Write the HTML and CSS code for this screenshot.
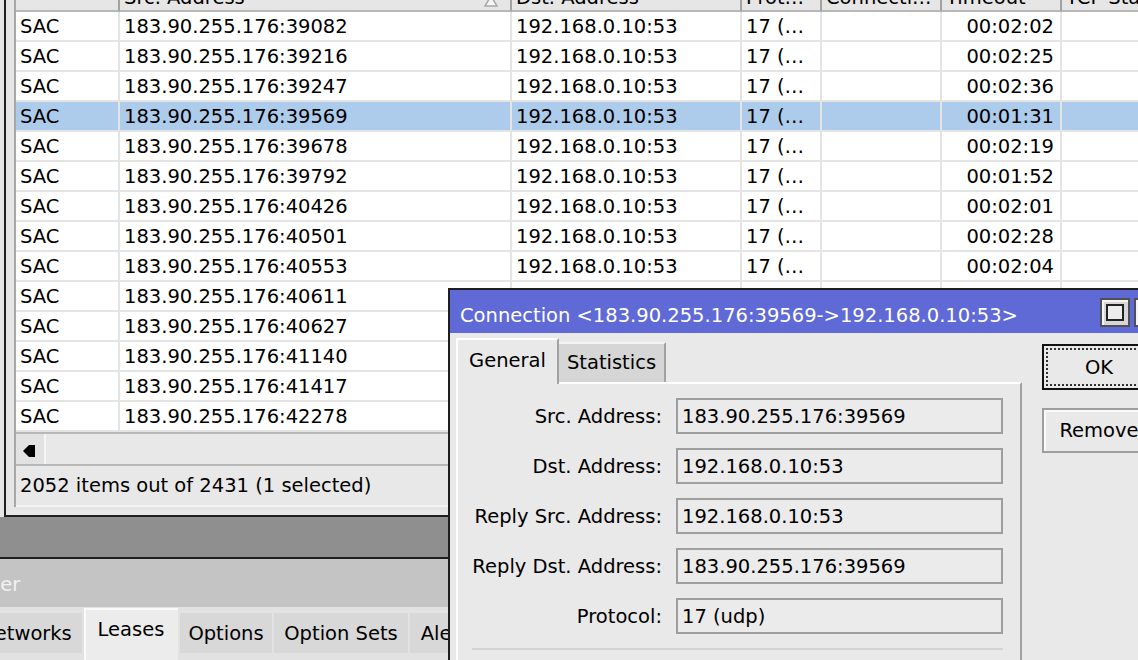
FILE: index.html
```html
<!DOCTYPE html>
<html>
<head>
    <link rel="stylesheet" href="styles.css">
</head>
<body>
<div class="desktop">

    <div class="window list-window">
        <div class="list-frame">
            <div class="list-body">
                <div class="row head">
                    <div class="cell c1"></div>
                    <div class="cell c2"><span>Src. Address</span>
                        <svg class="sort" width="14" height="12" viewBox="0 0 14 12"><polygon points="7,1 13,11 1,11" fill="#f6f6f6" stroke="#a8a8a8" stroke-width="1.5"/></svg>
                    </div>
                    <div class="cell c3">Dst. Address</div>
                    <div class="cell c4">Prot…</div>
                    <div class="cell c5">Connecti…</div>
                    <div class="cell c6 left">Timeout</div>
                    <div class="cell c7">TCP State</div>
                </div>
                <div class="row"><div class="cell c1">SAC</div><div class="cell c2">183.90.255.176:39082</div><div class="cell c3">192.168.0.10:53</div><div class="cell c4">17 (…</div><div class="cell c5"></div><div class="cell c6">00:02:02</div><div class="cell c7"></div></div>
                <div class="row"><div class="cell c1">SAC</div><div class="cell c2">183.90.255.176:39216</div><div class="cell c3">192.168.0.10:53</div><div class="cell c4">17 (…</div><div class="cell c5"></div><div class="cell c6">00:02:25</div><div class="cell c7"></div></div>
                <div class="row"><div class="cell c1">SAC</div><div class="cell c2">183.90.255.176:39247</div><div class="cell c3">192.168.0.10:53</div><div class="cell c4">17 (…</div><div class="cell c5"></div><div class="cell c6">00:02:36</div><div class="cell c7"></div></div>
                <div class="row selected"><div class="cell c1">SAC</div><div class="cell c2">183.90.255.176:39569</div><div class="cell c3">192.168.0.10:53</div><div class="cell c4">17 (…</div><div class="cell c5"></div><div class="cell c6">00:01:31</div><div class="cell c7"></div></div>
                <div class="row"><div class="cell c1">SAC</div><div class="cell c2">183.90.255.176:39678</div><div class="cell c3">192.168.0.10:53</div><div class="cell c4">17 (…</div><div class="cell c5"></div><div class="cell c6">00:02:19</div><div class="cell c7"></div></div>
                <div class="row"><div class="cell c1">SAC</div><div class="cell c2">183.90.255.176:39792</div><div class="cell c3">192.168.0.10:53</div><div class="cell c4">17 (…</div><div class="cell c5"></div><div class="cell c6">00:01:52</div><div class="cell c7"></div></div>
                <div class="row"><div class="cell c1">SAC</div><div class="cell c2">183.90.255.176:40426</div><div class="cell c3">192.168.0.10:53</div><div class="cell c4">17 (…</div><div class="cell c5"></div><div class="cell c6">00:02:01</div><div class="cell c7"></div></div>
                <div class="row"><div class="cell c1">SAC</div><div class="cell c2">183.90.255.176:40501</div><div class="cell c3">192.168.0.10:53</div><div class="cell c4">17 (…</div><div class="cell c5"></div><div class="cell c6">00:02:28</div><div class="cell c7"></div></div>
                <div class="row"><div class="cell c1">SAC</div><div class="cell c2">183.90.255.176:40553</div><div class="cell c3">192.168.0.10:53</div><div class="cell c4">17 (…</div><div class="cell c5"></div><div class="cell c6">00:02:04</div><div class="cell c7"></div></div>
                <!-- rows below sit under the dialog, only the first columns show -->
                <div class="row"><div class="cell c1">SAC</div><div class="cell c2">183.90.255.176:40611</div><div class="cell c3"></div><div class="cell c4"></div><div class="cell c5"></div><div class="cell c6"></div><div class="cell c7"></div></div>
                <div class="row"><div class="cell c1">SAC</div><div class="cell c2">183.90.255.176:40627</div><div class="cell c3"></div><div class="cell c4"></div><div class="cell c5"></div><div class="cell c6"></div><div class="cell c7"></div></div>
                <div class="row"><div class="cell c1">SAC</div><div class="cell c2">183.90.255.176:41140</div><div class="cell c3"></div><div class="cell c4"></div><div class="cell c5"></div><div class="cell c6"></div><div class="cell c7"></div></div>
                <div class="row"><div class="cell c1">SAC</div><div class="cell c2">183.90.255.176:41417</div><div class="cell c3"></div><div class="cell c4"></div><div class="cell c5"></div><div class="cell c6"></div><div class="cell c7"></div></div>
                <div class="row"><div class="cell c1">SAC</div><div class="cell c2">183.90.255.176:42278</div><div class="cell c3"></div><div class="cell c4"></div><div class="cell c5"></div><div class="cell c6"></div><div class="cell c7"></div></div>

                <div class="hscroll">
                    <div class="arrow-btn">
                        <svg width="14" height="14" viewBox="0 0 14 14"><path d="M0 7 L6 1 L12 1 L12 13 L6 13 Z" fill="#000"/></svg>
                    </div>
                </div>
                <div class="status">2052 items out of 2431 (1 selected)</div>
            </div>
        </div>
    </div>

    <div class="window dhcp-window">
        <div class="dhcp-title">DHCP Server</div>
        <div class="dhcp-tabs">
            <div class="dtab" style="width:75px">DHCP</div>
            <div class="dtab" style="width:112px">Networks</div>
            <div class="dtab active" style="width:94px">Leases</div>
            <div class="dtab" style="width:92px">Options</div>
            <div class="dtab" style="width:134px">Option Sets</div>
            <div class="dtab" style="width:78px">Alerts</div>
        </div>
    </div>

    <div class="window dialog">
        <div class="dialog-title">
            <span>Connection &lt;183.90.255.176:39569-&gt;192.168.0.10:53&gt;</span>
            <div class="title-btns">
                <div class="title-btn"><span></span></div>
                <div class="title-btn"><span></span></div>
            </div>
        </div>
        <div class="dialog-body">
            <div class="dialog-main">
                <div class="tabs">
                    <div class="tab active">General</div>
                    <div class="tab">Statistics</div>
                </div>
                <div class="panel">
                    <div class="field"><label>Src. Address:</label><div class="input">183.90.255.176:39569</div></div>
                    <div class="field"><label>Dst. Address:</label><div class="input">192.168.0.10:53</div></div>
                    <div class="field"><label>Reply Src. Address:</label><div class="input">192.168.0.10:53</div></div>
                    <div class="field"><label>Reply Dst. Address:</label><div class="input">183.90.255.176:39569</div></div>
                    <div class="field"><label>Protocol:</label><div class="input">17 (udp)</div></div>
                    <div class="separator"></div>
                </div>
            </div>
            <div class="dialog-buttons">
                <div class="button default">OK</div>
                <div class="button">Remove</div>
            </div>
        </div>
    </div>

</div>
</body>
</html>
```

FILE: styles.css
```css
body {
    margin: 0;
    font-family: "DejaVu Sans", Verdana, sans-serif;
    font-size: 19.5px;
    color: #000;
}

.desktop {
    position: relative;
    width: 1138px;
    height: 660px;
    overflow: hidden;
    background: #8f8f8f;
}

.window {
    position: absolute;
    box-sizing: border-box;
}

/* connection list */

.list-window {
    left: 0;
    top: -14px;
    width: 1240px;
    height: 531px;
    background: #e6e6e6;
}

.list-frame {
    box-sizing: border-box;
    height: 100%;
    margin-left: 4px;
    padding-left: 8px;
    border-left: 2px solid #1e1e1e;
    border-bottom: 2px solid #1e1e1e;
}

.list-body {
    border-left: 2px solid #a8a8a8;
    background: #fff;
}

.row {
    display: flex;
    white-space: nowrap;
}

.cell {
    flex-shrink: 0;
    box-sizing: border-box;
    height: 30px;
    line-height: 29px;
    padding: 0 4px;
    border-right: 2px solid #e4e4e4;
    border-bottom: 2px solid #e4e4e4;
    overflow: hidden;
}

.c1 { width: 104px; }
.c2 { width: 392px; }
.c3 { width: 230px; }
.c4 { width: 80px; }
.c5 { width: 120px; }
.c6 { width: 120px; text-align: right; padding-right: 6px; }
.c7 { width: 160px; }

.head .cell {
    height: 26px;
    line-height: 24px;
    background: #e6e6e6;
    border-right-color: #a2a2a2;
    border-bottom-color: #b8b8b8;
}

.head .c6.left {
    text-align: left;
}

.head .c2 {
    display: flex;
    justify-content: space-between;
    align-items: center;
}

.sort {
    margin: 6px 8px 0 0;
}

.row.selected .cell {
    background: #adcbeb;
}

.hscroll {
    height: 34px;
    box-sizing: border-box;
    border-top: 2px solid #b8b8b8;
    border-bottom: 2px solid #b8b8b8;
    background: #e8e8e8;
    display: flex;
}

.arrow-btn {
    width: 30px;
    padding-top: 4px;
    box-sizing: border-box;
    border-right: 2px solid #f6f6f6;
    display: flex;
    align-items: center;
    justify-content: center;
    background: #e2e2e2;
}

.status {
    height: 39px;
    line-height: 39px;
    padding-left: 4px;
    background: #e8e8e8;
    border-bottom: 2px solid #f2f2f2;
}

/* dhcp server window behind */

.dhcp-window {
    left: -116px;
    top: 557px;
    width: 640px;
    height: 110px;
    background: #e2e2e2;
    border-top: 2px solid #1e1e1e;
}

.dhcp-title {
    height: 48px;
    line-height: 52px;
    padding-left: 11px;
    background: #c4c4c4;
    color: #f2f2f2;
}

.dhcp-tabs {
    display: flex;
    gap: 2px;
    padding-left: 9px;
    align-items: flex-start;
}

.dtab {
    flex-shrink: 0;
    margin-top: 6px;
    height: 40px;
    line-height: 42px;
    text-align: center;
    background: #d8d8d8;
    white-space: nowrap;
}

.dtab.active {
    margin-top: 1px;
    height: 60px;
    line-height: 44px;
    background: #ececec;
    box-shadow: inset 2px 2px #fafafa;
}

/* connection dialog */

.dialog {
    left: 448px;
    top: 288px;
    width: 720px;
    height: 400px;
    background: #e9e9e9;
    border-left: 2px solid #1e1e1e;
    border-top: 2px solid #1e1e1e;
}

.dialog-title {
    box-sizing: border-box;
    height: 43px;
    padding: 8px 4px 0 10px;
    line-height: 35px;
    background: #5f6ad6;
    color: #fff;
    display: flex;
    justify-content: space-between;
    align-items: flex-start;
    white-space: nowrap;
}

.title-btns {
    display: flex;
    gap: 4px;
}

.title-btn {
    box-sizing: border-box;
    width: 30px;
    height: 29px;
    background: #d6d6d6;
    border: 2px solid #505050;
    box-shadow: inset 2px 2px #f4f4f4;
    display: flex;
    align-items: center;
    justify-content: center;
}

.title-btn span {
    box-sizing: border-box;
    width: 18px;
    height: 17px;
    border: 2px solid #222;
    background: #ececec;
}

.dialog-body {
    display: flex;
    gap: 20px;
    padding: 5px 0 0 6px;
}

.dialog-main {
    width: 566px;
    flex-shrink: 0;
}

.tabs {
    display: flex;
    align-items: flex-end;
    height: 44px;
    position: relative;
    z-index: 1;
}

.tab {
    box-sizing: border-box;
    width: 107px;
    height: 40px;
    line-height: 38px;
    text-align: center;
    background: #d6d6d6;
    border-top: 2px solid #f4f4f4;
    border-right: 2px solid #a2a2a2;
}

.tab.active {
    width: 103px;
    height: 46px;
    line-height: 42px;
    margin-bottom: -2px;
    background: #e9e9e9;
    border-left: 2px solid #fff;
    border-top-color: #fff;
}

.panel {
    height: 300px;
    padding: 14px 17px 0 0;
    border-top: 2px solid #fff;
    border-left: 2px solid #fff;
    border-right: 2px solid #a2a2a2;
}

.field {
    display: flex;
    align-items: center;
    gap: 14px;
    margin-bottom: 14px;
}

.field label {
    width: 204px;
    text-align: right;
    white-space: nowrap;
}

.input {
    box-sizing: border-box;
    width: 327px;
    height: 36px;
    line-height: 33px;
    padding-left: 4px;
    border: 2px solid #9e9e9e;
    background: #ebebeb;
    white-space: nowrap;
}

.separator {
    height: 2px;
    margin: 4px 0 0 14px;
    background: #d4d4d4;
}

.dialog-buttons {
    display: flex;
    flex-direction: column;
    gap: 18px;
    margin-top: 6px;
}

.button {
    box-sizing: border-box;
    width: 114px;
    height: 45px;
    line-height: 42px;
    text-align: center;
    border: 2px solid #9e9e9e;
    box-shadow: inset 2px 2px #fafafa;
    white-space: nowrap;
}

.button.default {
    height: 46px;
    line-height: 43px;
    border-color: #111;
    box-shadow: none;
    outline: 2px dotted #333;
    outline-offset: -6px;
}
```
